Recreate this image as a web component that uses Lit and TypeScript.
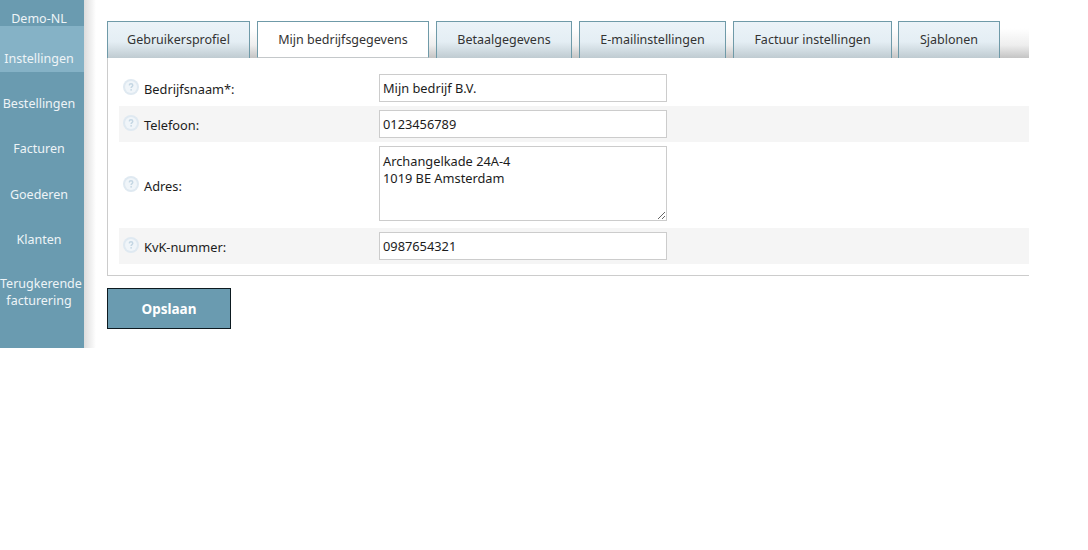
import { LitElement, html, css } from "lit";
import { customElement } from "lit/decorators.js";

const helpIcon = html`<svg class="help" viewBox="0 0 16 16" width="16" height="16" aria-hidden="true">
  <circle cx="8" cy="8" r="8" fill="#dfe9f1"></circle>
  <circle cx="8" cy="8" r="6" fill="#f0f5f9"></circle>
  <path d="M6.2 6.4C6.3 5.3 7 4.8 8 4.8c1.1 0 1.8.6 1.8 1.5 0 1.3-1.7 1.4-1.7 2.8" fill="none" stroke="#c4d6e3" stroke-width="1.4"></path>
  <rect x="7.4" y="10.1" width="1.5" height="1.5" fill="#c4d6e3"></rect>
</svg>`;

@customElement("app-root")
export class AppRoot extends LitElement {
  static styles = css`
    :host { display: block; width: 1088px; height: 550px; background: #fff; font-family: "Noto Sans", "Open Sans", sans-serif; font-size: 12.5px; color: #1c1c1c; overflow: hidden; }
    .page { display: flex; height: 348px; }
    .side { width: 84px; flex: none; box-sizing: border-box; padding-right: 6px; background: #6a9bb0; color: #eef4f7; text-align: center; line-height: 17px; }
    .brand { height: 26px; padding-top: 10px; box-sizing: border-box; line-height: 17px; }
    .nav { height: 45.3px; box-sizing: border-box; padding-top: 18px; display: flex; align-items: center; justify-content: center; }
    .nav.active { background: #85b2c6; height: 46px; margin-right: -6px; padding-right: 6px; }
    .nav.multi { display: block; height: 64px; padding-top: 22px; white-space: nowrap; }
    .shade { width: 12px; flex: none; background: linear-gradient(to right, #dcdcdc, #fff); }
    .main { width: 922px; margin-left: 11px; padding-top: 21px; box-sizing: border-box; }
    .tabs { display: flex; gap: 7px; height: 37px; background: linear-gradient(to bottom, #fff 20%, #eee 65%, #c4c4c4 100%); }
    .tab { box-sizing: border-box; height: 37px; border: 1px solid #6f9aa8; border-bottom: 0; background: linear-gradient(to bottom, #ebf3f8 0%, #e4eef4 55%, #bfcbd1 100%); display: flex; align-items: center; justify-content: center; padding-bottom: 1px; color: #333; }
    .tab:last-child { margin-left: -1px; }
    .tab.active { background: #fff; border-bottom: 1px solid #c4c8ca; }
    .panel { border-left: 1px solid #ccc; border-bottom: 1px solid #ccc; padding: 12px 0 11px 11px; font-size: 12.8px; }
    .row { display: flex; align-items: center; height: 36px; }
    .row.alt { background: #f5f5f5; }
    .row.tall { height: 86px; }
    .help { margin-left: 4px; margin-top: -3px; flex: none; }
    .label { width: 235px; margin-left: 5px; margin-top: 2px; flex: none; }
    input, textarea { box-sizing: border-box; width: 288px; border: 1px solid #ccc; background: #fff; font: inherit; color: #1c1c1c; padding: 0 3px; margin: 0; outline: none; }
    input { height: 28px; }
    textarea { display: block; height: 75px; padding: 6px 3px; line-height: 17px; margin-top: -3px; resize: both; }
    .save { display: block; margin-top: 12px; width: 124px; height: 41px; box-sizing: border-box; background: #6a9bb0; border: 1px solid #0d1a20; color: #fff; font: inherit; font-size: 13.5px; font-weight: 700; padding: 0; }
  `;

  render() {
    const tabs: [string, number, boolean?][] = [
      ["Gebruikersprofiel", 143],
      ["Mijn bedrijfsgegevens", 172, true],
      ["Betaalgegevens", 136],
      ["E-mailinstellingen", 147],
      ["Factuur instellingen", 159],
      ["Sjablonen", 102],
    ];
    return html`<div class="page">
      <nav class="side">
        <div class="brand">Demo-NL</div>
        <div class="nav active">Instellingen</div>
        <div class="nav">Bestellingen</div>
        <div class="nav">Facturen</div>
        <div class="nav">Goederen</div>
        <div class="nav">Klanten</div>
        <div class="nav multi">Terugkerende<br />facturering</div>
      </nav>
      <div class="shade"></div>
      <main class="main">
        <div class="tabs">
          ${tabs.map(([t, w, a]) => html`<div class="tab ${a ? "active" : ""}" style="width:${w}px">${t}</div>`)}
        </div>
        <div class="panel">
          <div class="row">${helpIcon}<span class="label">Bedrijfsnaam*:</span><input value="Mijn bedrijf B.V." /></div>
          <div class="row alt">${helpIcon}<span class="label">Telefoon:</span><input value="0123456789" /></div>
          <div class="row tall">${helpIcon}<span class="label">Adres:</span><textarea .value=${"Archangelkade 24A-4\n1019 BE Amsterdam"}></textarea></div>
          <div class="row alt">${helpIcon}<span class="label">KvK-nummer:</span><input value="0987654321" /></div>
        </div>
        <button class="save">Opslaan</button>
      </main>
    </div>`;
  }
}
